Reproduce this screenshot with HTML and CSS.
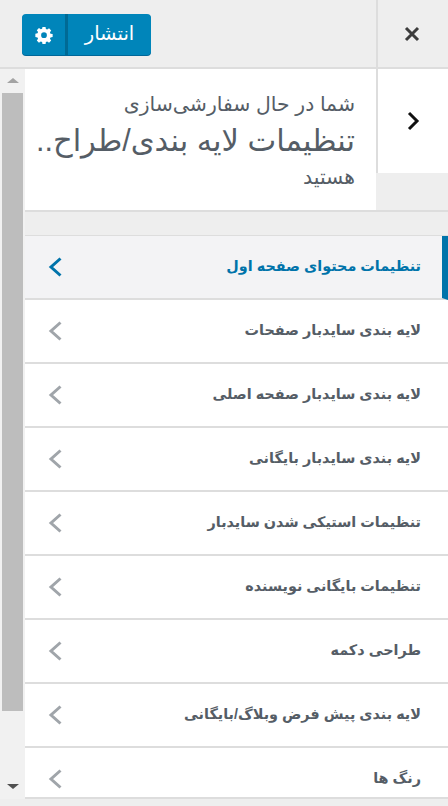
FILE: index.html
```html
<!DOCTYPE html>
<html lang="fa" dir="rtl">
<head>
    <meta charset="UTF-8" />
    <title>سفارشی‌سازی</title>
    <link rel="stylesheet" href="styles.css">
</head>
<body>
<div id="box">
    <div class="top_bar">
        <a class="close_btn" href="#">
            <svg width="16" height="16" viewBox="0 0 16 16"><path d="M2 2L14 14M14 2L2 14" stroke="#3c3c3c" stroke-width="3" fill="none"/></svg>
        </a>
        <div class="publish_wrap">
            <a class="publish" href="#">انتشار</a>
            <a class="settings" href="#">
                <svg width="18" height="18" viewBox="0 0 20 20"><path fill="#fff" fill-rule="evenodd" d="M8.3 1h3.400l.4 2.400 1.500.6 2-1.400 2.400 2.400-1.400 2 .6 1.500 2.400.4v3.400l-2.400.4-.6 1.500 1.400 2-2.400 2.400-2-1.400-1.500.6-.4 2.400H8.300l-.4-2.400-1.500-.6-2 1.400-2.400-2.400 1.400-2-.6-1.500-2.400-.4V8.500l2.400-.4.6-1.500-1.400-2L4.400 2.200l2 1.400 1.500-.6zM10 7a3.200 3.200 0 1 0 0 6.400A3.200 3.200 0 0 0 10 7z"/></svg>
            </a>
        </div>
    </div>
    <div class="main">
        <div class="panel">
            <div class="info_row">
                <a class="back_btn" href="#">
                    <svg width="14" height="20" viewBox="0 0 14 20"><path d="M3 2L11 10L3 18" stroke="#111" stroke-width="3" fill="none"/></svg>
                </a>
                <div class="info">
                    <p class="info_small">شما در حال سفارشی‌سازی</p>
                    <p class="info_title">تنظیمات لایه بندی/طراح..</p>
                    <p class="info_small">هستید</p>
                </div>
            </div>
            <div class="spacer"></div>
            <ul class="menu">
                <li class="active"><span>تنظیمات محتوای صفحه اول</span><svg class="arrow" width="14" height="20" viewBox="0 0 14 20"><path d="M12.500 1.500L3 10L12.500 18.500" fill="none" stroke-width="3"/></svg></li>
                <li><span>لایه بندی سایدبار صفحات</span><svg class="arrow" width="14" height="20" viewBox="0 0 14 20"><path d="M12.500 1.500L3 10L12.500 18.500" fill="none" stroke-width="3"/></svg></li>
                <li><span>لایه بندی سایدبار صفحه اصلی</span><svg class="arrow" width="14" height="20" viewBox="0 0 14 20"><path d="M12.500 1.500L3 10L12.500 18.500" fill="none" stroke-width="3"/></svg></li>
                <li><span>لایه بندی سایدبار بایگانی</span><svg class="arrow" width="14" height="20" viewBox="0 0 14 20"><path d="M12.500 1.500L3 10L12.500 18.500" fill="none" stroke-width="3"/></svg></li>
                <li><span>تنظیمات استیکی شدن سایدبار</span><svg class="arrow" width="14" height="20" viewBox="0 0 14 20"><path d="M12.500 1.500L3 10L12.500 18.500" fill="none" stroke-width="3"/></svg></li>
                <li><span>تنظیمات بایگانی نویسنده</span><svg class="arrow" width="14" height="20" viewBox="0 0 14 20"><path d="M12.500 1.500L3 10L12.500 18.500" fill="none" stroke-width="3"/></svg></li>
                <li><span>طراحی دکمه</span><svg class="arrow" width="14" height="20" viewBox="0 0 14 20"><path d="M12.500 1.500L3 10L12.500 18.500" fill="none" stroke-width="3"/></svg></li>
                <li><span>لایه بندی پیش فرض وبلاگ/بایگانی</span><svg class="arrow" width="14" height="20" viewBox="0 0 14 20"><path d="M12.500 1.500L3 10L12.500 18.500" fill="none" stroke-width="3"/></svg></li>
                <li><span>رنگ ها</span><svg class="arrow" width="14" height="20" viewBox="0 0 14 20"><path d="M12.500 1.500L3 10L12.500 18.500" fill="none" stroke-width="3"/></svg></li>
            </ul>
        </div>
        <div class="scrollbar">
            <i class="up"></i>
            <div class="thumb"></div>
            <i class="down"></i>
        </div>
    </div>
</div>
</body>
</html>
```

FILE: styles.css
```css
html, body {
    margin: 0;
    padding: 0;
}
body {
    width: 448px;
    height: 806px;
    overflow: hidden;
    background: #eee;
    font-family: "Liberation Sans", "DejaVu Sans", sans-serif;
    color: #555d66;
}
p {
    margin: 0;
}
ul {
    margin: 0;
    padding: 0;
}
a {
    text-decoration: none;
}
#box {
    height: 806px;
    display: flex;
    flex-direction: column;
}

.top_bar {
    height: 67px;
    flex: none;
    display: flex;
    justify-content: space-between;
    border-bottom: 2px solid #ddd;
}
.close_btn {
    width: 68px;
    padding-right: 2px;
    border-left: 2px solid #ddd;
    display: flex;
    align-items: center;
    justify-content: center;
}
.publish_wrap {
    display: flex;
    height: 41px;
    margin: 14px 0 0 22px;
    background: #0085ba;
    border-radius: 4px;
    box-shadow: 0 1px 0 #006799;
}
.publish {
    width: 83px;
    color: #fff;
    font-size: 19.5px;
    text-align: center;
    line-height: 38px;
    border-left: 3px solid #006a95;
}
.settings {
    width: 43px;
    display: flex;
    align-items: center;
    justify-content: center;
}

.main {
    flex: 1;
    min-height: 0;
    display: flex;
    border-bottom: 7px solid #eee;
}
.panel {
    flex: 1;
    min-width: 0;
    overflow: hidden;
    border-bottom: 2px solid #ddd;
}
.info_row {
    display: flex;
    height: 141px;
    border-bottom: 2px solid #ddd;
}
.back_btn {
    width: 70px;
    height: 104px;
    background: #fff;
    display: flex;
    align-items: center;
    justify-content: center;
    border-left: 2px solid #ddd;
}
.info {
    flex: 1;
    min-width: 0;
    background: #fff;
    padding: 23px 21px 0 12px;
}
.info_small {
    font-size: 20.4px;
    line-height: 24px;
}
.info_title {
    font-size: 30.5px;
    line-height: 40px;
    margin: 4px 0 5px;
    white-space: nowrap;
}
.spacer {
    height: 23px;
    border-bottom: 1px solid #ddd;
}
.menu {
    list-style: none;
}
.menu li {
    height: 62px;
    display: flex;
    align-items: center;
    justify-content: space-between;
    padding: 0 27px 0 23px;
    background: #fff;
    border-bottom: 2px solid #ddd;
    color: #555d66;
    font-size: 14.4px;
    font-weight: bold;
}
.menu li span {
    margin-bottom: 2px;
}
.menu li.active {
    background: #f3f3f5;
    color: #0073aa;
    border-right: 6px solid #0073aa;
    padding-right: 21px;
}
.arrow {
    stroke: #a0a5aa;
}
.active .arrow {
    stroke: #0073aa;
}

.scrollbar {
    width: 25px;
    flex: none;
    background: #f1f1f1;
    display: flex;
    flex-direction: column;
    align-items: center;
}
.up {
    margin: 9px 0 10px;
    border-style: solid;
    border-width: 0 6px 5px;
    border-color: transparent transparent #a3a3a3;
}
.thumb {
    width: 21px;
    height: 618px;
    background: #bdbdbd;
}
.down {
    margin-top: 73px;
    border-style: solid;
    border-width: 5px 6px 0;
    border-color: #505050 transparent transparent;
}
```
